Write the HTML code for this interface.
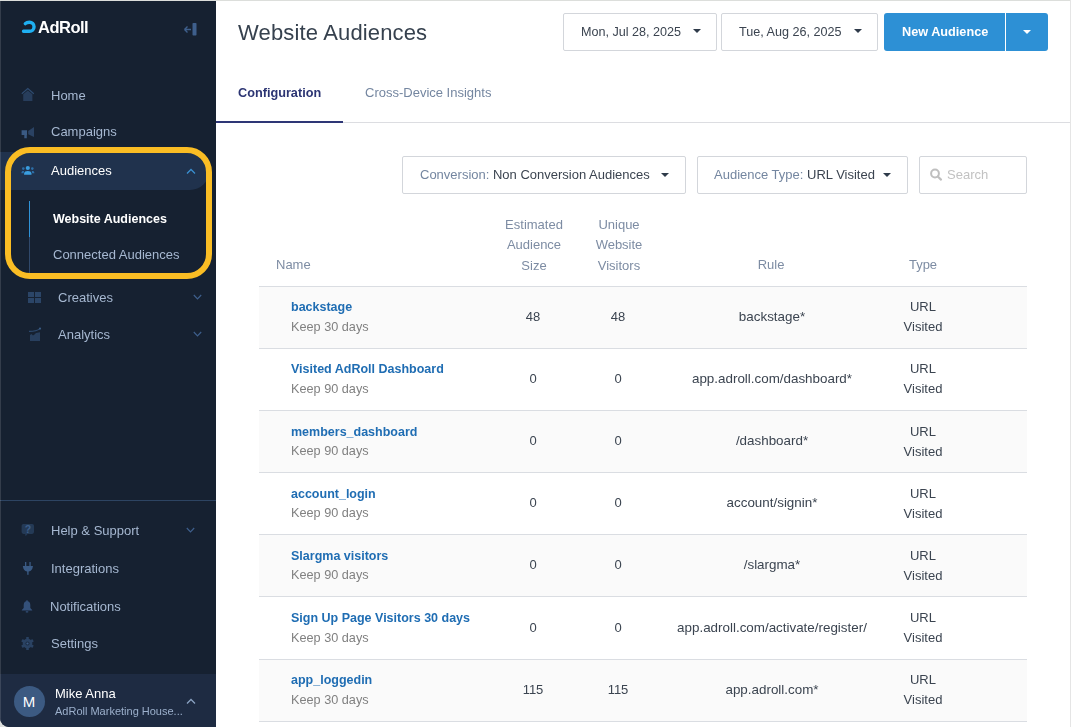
<!DOCTYPE html>
<html><head><meta charset="utf-8">
<style>
*{box-sizing:border-box;margin:0;padding:0}
html,body{width:1071px;height:727px;overflow:hidden;background:#dcdedc;font-family:"Liberation Sans",sans-serif;font-size:13px}
.win{position:absolute;left:0;top:0;width:1071px;height:727px;background:#fff;overflow:hidden;border-bottom-left-radius:9px}
.side{position:absolute;left:0;top:0;width:216px;height:727px;background:#162131}
.a{position:absolute;white-space:nowrap;line-height:20px;will-change:transform}
.nav{color:#a6b8d1;font-size:13px}
.ic{position:absolute}
.main{position:absolute;left:216px;top:0;right:0;bottom:0;background:#fff}
.btn{position:absolute;border:1px solid #d3d6db;border-radius:2px;background:#fff}
.caret{position:absolute;width:0;height:0;border-left:4px solid transparent;border-right:4px solid transparent;border-top:4px solid #2f3b4a}
.tbl{position:absolute;left:259px;width:768px}
.row{position:absolute;left:0;width:768px;border-top:1px solid #dadde2}
.row.s{background:#fafafa}
.lnk{color:#1f6db3;font-weight:bold}
.gr{color:#818181}
.tx{color:#3b4450}
.hd{color:#7d8ca3}
.c{text-align:center}
</style></head><body>
<div class="win">
  <div class="side">
    <!-- logo -->
    <svg class="ic" style="left:18px;top:16px" width="20" height="20" viewBox="0 0 20 20"><path d="M7.3 7.6 C8.5 6.4 10 6.2 11.5 6.2 A4.55 4.55 0 0 1 11.5 15.3 H5.5" fill="none" stroke="#1fb0f2" stroke-width="3.4" stroke-linecap="round"/></svg>
    <div class="a" style="left:38px;top:17px;color:#fff;font-weight:bold;font-size:16.5px;letter-spacing:-0.5px">AdRoll</div>
    <!-- collapse -->
    <svg class="ic" style="left:183px;top:22px" width="15" height="14" viewBox="0 0 15 14"><path d="M1.5 7.5 H8 M1.5 7.5 L4.5 4.5 M1.5 7.5 L4.5 10.5" stroke="#3e5f8c" stroke-width="1.4" fill="none"/><rect x="9.5" y="1" width="4" height="12.5" rx="0.8" fill="#3e5f8c"/></svg>

    <!-- Home -->
    <svg class="ic" style="left:15px;top:82px" width="30" height="30" viewBox="0 0 30 30"><path d="M6.8 11.8 L12.8 6.6 L18.8 11.8" stroke="#2e4b70" stroke-width="1.2" fill="none"/><path d="M8.2 12.2 L12.8 8.4 L17.4 12.2 V19 H8.2Z" fill="#273d5b"/></svg>
    <div class="a nav" style="left:51px;top:85.7px">Home</div>
    <!-- Campaigns -->
    <svg class="ic" style="left:15px;top:122px" width="30" height="30" viewBox="0 0 30 30"><path d="M6.6 8.3 H12 V13 H11.8 V16.2 H9.3 V13 H6.6Z" fill="#3a5a83"/><path d="M13.2 9 L19 5 V15 L13.2 12.2Z" fill="#2a4263"/></svg>
    <div class="a nav" style="left:51px;top:122.1px">Campaigns</div>
    <!-- Audiences active -->
    <div style="position:absolute;left:0;top:152px;width:209px;height:38px;background:#20324d;border-radius:0 19px 19px 0"></div>
    <svg class="ic" style="left:15px;top:155px" width="30" height="30" viewBox="0 0 30 30"><circle cx="12.8" cy="13" r="2.1" fill="#3a9ee0"/><path d="M9.1 19.8 V18.6 C9.1 16.6 10.8 15.9 12.8 15.9 C14.8 15.9 16.5 16.6 16.5 18.6 V19.8Z" fill="#3a9ee0"/><circle cx="8.3" cy="13.6" r="1.3" fill="#2d70aa"/><circle cx="17.3" cy="13.6" r="1.3" fill="#2d70aa"/><path d="M6.4 18.2 C6.4 16.6 7.2 16 8.4 16 L9 16.1 L8.6 18.2Z M19.4 18.2 C19.4 16.6 18.6 16 17.4 16 L16.8 16.1 L17.2 18.2Z" fill="#2d70aa"/></svg>
    <div class="a" style="left:51px;top:160.5px;color:#fff">Audiences</div>
    <svg class="ic" style="left:186px;top:168px" width="10" height="7" viewBox="0 0 10 7"><path d="M1 5.5 L5 1.5 L9 5.5" stroke="#3a8fd0" stroke-width="1.3" fill="none"/></svg>
    <!-- sub -->
    <div style="position:absolute;left:29px;top:201px;width:1px;height:36px;background:#2f93d8"></div>
    <div style="position:absolute;left:29px;top:237px;width:1px;height:36px;background:#30496b"></div>
    <div class="a" style="left:53px;top:209.4px;color:#fff;font-weight:bold;font-size:12.5px">Website Audiences</div>
    <div class="a nav" style="left:53px;top:245.3px">Connected Audiences</div>
    <!-- yellow highlight -->
    <div style="position:absolute;left:5px;top:147px;width:207px;height:132px;border:6px solid #fabd24;border-radius:25px"></div>
    <!-- Creatives -->
    <svg class="ic" style="left:28px;top:292px" width="13" height="11" viewBox="0 0 13 11"><rect x="0" y="0" width="6" height="5" fill="#2b4567"/><rect x="7" y="0" width="6" height="5" fill="#2b4567"/><rect x="0" y="6" width="6" height="5" fill="#2b4567"/><rect x="7" y="6" width="6" height="5" fill="#2b4567"/></svg>
    <div class="a nav" style="left:57.5px;top:287.5px">Creatives</div>
    <svg class="ic" style="left:193px;top:294px" width="9" height="6" viewBox="0 0 9 6"><path d="M0.8 1 L4.5 4.8 L8.2 1" stroke="#3e5f8c" stroke-width="1.2" fill="none"/></svg>
    <!-- Analytics -->
    <svg class="ic" style="left:20px;top:285px" width="30" height="60" viewBox="0 0 30 60"><path d="M10 56 V50 L11.5 49 L13 50.5 L14.5 49.5 L16 48 L20 47.3 V56Z" fill="#283f5e"/><path d="M9 46.4 C13 46.4 17 46 20 43.6" stroke="#2e4b70" stroke-width="1.1" fill="none"/><circle cx="20" cy="43.6" r="1.1" fill="#3a5a83"/></svg>
    <div class="a nav" style="left:57.5px;top:325px">Analytics</div>
    <svg class="ic" style="left:193px;top:331px" width="9" height="6" viewBox="0 0 9 6"><path d="M0.8 1 L4.5 4.8 L8.2 1" stroke="#3e5f8c" stroke-width="1.2" fill="none"/></svg>

    <!-- divider -->
    <div style="position:absolute;left:0;top:500px;width:216px;height:1px;background:#2d4462"></div>
    <!-- Help -->
    <svg class="ic" style="left:15px;top:515px" width="30" height="30" viewBox="0 0 30 30"><rect x="6.6" y="8.9" width="12.4" height="10" rx="1.8" fill="#243a56"/><path d="M10 18.5 L10.6 21.3 L13 18.5Z" fill="#243a56"/><text x="12.9" y="17.7" font-size="10.5" font-weight="bold" text-anchor="middle" fill="#3d5f8a" font-family="Liberation Sans">?</text></svg>
    <div class="a nav" style="left:51px;top:520.5px">Help &amp; Support</div>
    <svg class="ic" style="left:186px;top:527px" width="9" height="6" viewBox="0 0 9 6"><path d="M0.8 1 L4.5 4.8 L8.2 1" stroke="#3e5f8c" stroke-width="1.2" fill="none"/></svg>
    <!-- Integrations -->
    <svg class="ic" style="left:22px;top:562px" width="12" height="13" viewBox="0 0 12 13"><rect x="3" y="0" width="1.3" height="4" fill="#3a5a84"/><rect x="7.4" y="0" width="1.3" height="4" fill="#3a5a84"/><path d="M0.8 4 H11 L10.4 6.4 C9.6 8.5 8 9.4 6.6 9.5 V12.8 H5.2 V9.5 C3.8 9.4 2.2 8.5 1.4 6.4Z" fill="#3a5a84"/></svg>
    <div class="a nav" style="left:51px;top:559.3px">Integrations</div>
    <!-- Notifications -->
    <svg class="ic" style="left:21px;top:600px" width="12" height="13" viewBox="0 0 12 13"><path d="M6 0.3 C6.6 0.3 6.8 0.8 6.8 1.2 C8.8 1.7 9.3 3.5 9.3 5.2 V8 L11.2 10 V10.6 H0.8 V10 L2.7 8 V5.2 C2.7 3.5 3.2 1.7 5.2 1.2 C5.2 0.8 5.4 0.3 6 0.3Z" fill="#34517a"/><rect x="4.6" y="11.2" width="2.8" height="1.2" rx="0.6" fill="#34517a"/></svg>
    <div class="a nav" style="left:49.5px;top:597.1px">Notifications</div>
    <!-- Settings -->
    <svg class="ic" style="left:21px;top:637px" width="13" height="13" viewBox="0 0 13 13"><g fill="#2a4262"><circle cx="6.5" cy="6.5" r="4.8"/><rect x="5.2" y="0" width="2.6" height="13" rx="0.5"/><rect x="5.2" y="0" width="2.6" height="13" rx="0.5" transform="rotate(60 6.5 6.5)"/><rect x="5.2" y="0" width="2.6" height="13" rx="0.5" transform="rotate(-60 6.5 6.5)"/></g><circle cx="6.5" cy="6.5" r="2.1" fill="#1d2d44"/><circle cx="6.5" cy="6.5" r="1.1" fill="#3a5a84"/></svg>
    <div class="a nav" style="left:51px;top:634px">Settings</div>

    <!-- user -->
    <div style="position:absolute;left:0;top:674px;width:216px;height:53px;background:#1e2b42"></div>
    <div style="position:absolute;left:13.5px;top:685.5px;width:31px;height:31px;border-radius:50%;background:#3c5a82;color:#fff;text-align:center;line-height:31px;font-size:15px">M</div>
    <div class="a" style="left:54.5px;top:684.2px;color:#fff">Mike Anna</div>
    <div class="a" style="left:54.5px;top:701px;color:#9cb0cc;font-size:11px">AdRoll Marketing House...</div>
    <svg class="ic" style="left:186px;top:697px" width="10" height="8" viewBox="0 0 10 8"><path d="M1 6.5 L5 2.5 L9 6.5" stroke="#8aa2c2" stroke-width="1.3" fill="none"/></svg>
  </div>

  <!-- MAIN -->
  <div class="a" style="left:238px;top:17.5px;font-size:22px;line-height:30px;color:#36414e;letter-spacing:0.15px">Website Audiences</div>

  <div class="btn" style="left:563px;top:13px;width:154px;height:38px"></div>
  <div class="a tx" style="left:581px;top:21.7px;font-size:12.6px">Mon, Jul 28, 2025</div>
  <div class="caret" style="left:692.5px;top:29px"></div>
  <div class="btn" style="left:721px;top:13px;width:157px;height:38px"></div>
  <div class="a tx" style="left:739px;top:21.7px;font-size:12.6px">Tue, Aug 26, 2025</div>
  <div class="caret" style="left:853.5px;top:29px"></div>

  <div style="position:absolute;left:884px;top:13px;width:121px;height:38px;background:#2d90d5;border-radius:3px 0 0 3px"></div>
  <div style="position:absolute;left:1006px;top:13px;width:42px;height:38px;background:#2d90d5;border-radius:0 3px 3px 0"></div>
  <div class="a" style="left:901.5px;top:21.7px;color:#fff;font-weight:bold;font-size:12.7px">New Audience</div>
  <div class="caret" style="left:1023px;top:30px;border-top-color:#fff"></div>

  <!-- tabs -->
  <div class="a" style="left:238px;top:82.9px;color:#2c3573;font-weight:bold;font-size:12.7px">Configuration</div>
  <div class="a" style="left:364.5px;top:82.7px;color:#7486a0">Cross-Device Insights</div>
  <div style="position:absolute;left:216px;top:122px;width:854px;height:1px;background:#dcdde1"></div>
  <div style="position:absolute;left:216px;top:121px;width:127px;height:2px;background:#2e3676"></div>

  <!-- filters -->
  <div class="btn" style="left:402px;top:156px;width:284px;height:38px"></div>
  <div class="a" style="left:419.5px;top:164.5px"><span style="color:#7486a0">Conversion: </span><span class="tx">Non Conversion Audiences</span></div>
  <div class="caret" style="left:660.5px;top:173px"></div>
  <div class="btn" style="left:697px;top:156px;width:211px;height:38px"></div>
  <div class="a" style="left:714px;top:164.5px"><span style="color:#7486a0">Audience Type: </span><span class="tx">URL Visited</span></div>
  <div class="caret" style="left:883px;top:173px"></div>
  <div class="btn" style="left:919px;top:156px;width:108px;height:38px"></div>
  <svg class="ic" style="left:929px;top:168px" width="14" height="14" viewBox="0 0 14 14"><circle cx="6" cy="5.5" r="3.9" stroke="#bfbfbf" stroke-width="2" fill="none"/><path d="M8.8 8.5 L12 11.6" stroke="#bfbfbf" stroke-width="2.2" stroke-linecap="round"/></svg>
  <div class="a" style="left:947px;top:164.5px;color:#c2c2c2">Search</div>

  <!-- table header -->
  <div class="a hd" style="left:276px;top:255.3px">Name</div>
  <div class="a hd c" style="left:493.5px;top:214.6px;width:80px;line-height:20.3px">Estimated<br>Audience<br>Size</div>
  <div class="a hd c" style="left:579px;top:214.6px;width:80px;line-height:20.3px">Unique<br>Website<br>Visitors</div>
  <div class="a hd c" style="left:721px;top:255.3px;width:100px">Rule</div>
  <div class="a hd c" style="left:873px;top:255.3px;width:100px">Type</div>

  <div class="tbl" style="top:0;height:727px">
<div class="row s" style="top:286px;height:62px"><div class="a lnk" style="left:32px;top:10.30px;font-size:12.5px">backstage</div><div class="a gr" style="font-size:12.7px;left:32px;top:29.80px">Keep 30 days</div><div class="a tx c" style="left:234px;top:19.80px;width:80px">48</div><div class="a tx c" style="left:319px;top:19.80px;width:80px">48</div><div class="a tx c" style="left:413px;top:19.80px;width:200px;font-size:13.4px">backstage*</div><div class="a tx c" style="left:614px;top:10.30px;width:100px">URL<br>Visited</div></div>
<div class="row" style="top:348px;height:62px"><div class="a lnk" style="left:32px;top:10.44px;font-size:12.5px">Visited AdRoll Dashboard</div><div class="a gr" style="font-size:12.7px;left:32px;top:29.94px">Keep 90 days</div><div class="a tx c" style="left:234px;top:19.94px;width:80px">0</div><div class="a tx c" style="left:319px;top:19.94px;width:80px">0</div><div class="a tx c" style="left:413px;top:19.94px;width:200px;font-size:13.4px">app.adroll.com/dashboard*</div><div class="a tx c" style="left:614px;top:10.44px;width:100px">URL<br>Visited</div></div>
<div class="row s" style="top:410px;height:62px"><div class="a lnk" style="left:32px;top:10.58px;font-size:12.5px">members_dashboard</div><div class="a gr" style="font-size:12.7px;left:32px;top:30.08px">Keep 90 days</div><div class="a tx c" style="left:234px;top:20.08px;width:80px">0</div><div class="a tx c" style="left:319px;top:20.08px;width:80px">0</div><div class="a tx c" style="left:413px;top:20.08px;width:200px;font-size:13.4px">/dashboard*</div><div class="a tx c" style="left:614px;top:10.58px;width:100px">URL<br>Visited</div></div>
<div class="row" style="top:472px;height:62px"><div class="a lnk" style="left:32px;top:10.72px;font-size:12.5px">account_login</div><div class="a gr" style="font-size:12.7px;left:32px;top:30.22px">Keep 90 days</div><div class="a tx c" style="left:234px;top:20.22px;width:80px">0</div><div class="a tx c" style="left:319px;top:20.22px;width:80px">0</div><div class="a tx c" style="left:413px;top:20.22px;width:200px;font-size:13.4px">account/signin*</div><div class="a tx c" style="left:614px;top:10.72px;width:100px">URL<br>Visited</div></div>
<div class="row s" style="top:534px;height:62px"><div class="a lnk" style="left:32px;top:10.86px;font-size:12.5px">Slargma visitors</div><div class="a gr" style="font-size:12.7px;left:32px;top:30.36px">Keep 90 days</div><div class="a tx c" style="left:234px;top:20.36px;width:80px">0</div><div class="a tx c" style="left:319px;top:20.36px;width:80px">0</div><div class="a tx c" style="left:413px;top:20.36px;width:200px;font-size:13.4px">/slargma*</div><div class="a tx c" style="left:614px;top:10.86px;width:100px">URL<br>Visited</div></div>
<div class="row" style="top:596px;height:63px"><div class="a lnk" style="left:32px;top:11.00px;font-size:12.5px">Sign Up Page Visitors 30 days</div><div class="a gr" style="font-size:12.7px;left:32px;top:30.50px">Keep 30 days</div><div class="a tx c" style="left:234px;top:20.50px;width:80px">0</div><div class="a tx c" style="left:319px;top:20.50px;width:80px">0</div><div class="a tx c" style="left:413px;top:20.50px;width:200px;font-size:13.4px">app.adroll.com/activate/register/</div><div class="a tx c" style="left:614px;top:11.00px;width:100px">URL<br>Visited</div></div>
<div class="row s" style="top:659px;height:62px"><div class="a lnk" style="left:32px;top:10.14px;font-size:12.5px">app_loggedin</div><div class="a gr" style="font-size:12.7px;left:32px;top:29.64px">Keep 30 days</div><div class="a tx c" style="left:234px;top:19.64px;width:80px">115</div><div class="a tx c" style="left:319px;top:19.64px;width:80px">115</div><div class="a tx c" style="left:413px;top:19.64px;width:200px;font-size:13.4px">app.adroll.com*</div><div class="a tx c" style="left:614px;top:10.14px;width:100px">URL<br>Visited</div></div>
<div class="row" style="top:721px;height:20px"></div></div>
<div style="position:absolute;left:0;top:0;width:1071px;height:1px;background:#dcdedb"></div>
<div style="position:absolute;left:1070px;top:0;width:1px;height:727px;background:#e5e5e5"></div>
<div style="position:absolute;left:0;top:1px;width:1px;height:726px;background:rgba(255,255,255,0.13)"></div>
</div>
</body></html>
